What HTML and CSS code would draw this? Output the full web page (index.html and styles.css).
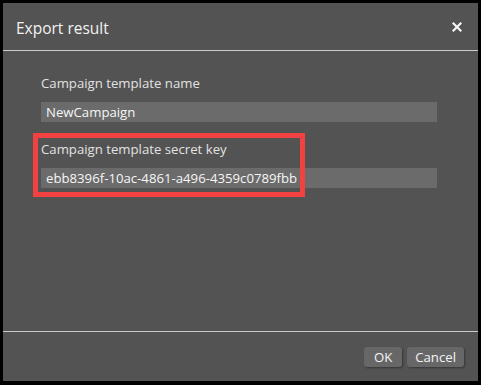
FILE: index.html
```html
<!DOCTYPE html>
<html>
<head>
<meta charset="utf-8">
<link rel="stylesheet" href="styles.css">
</head>
<body>
<div class="dialog">
  <div class="header">
    <span class="title">Export result</span>
    <svg class="close" width="10" height="10" viewBox="0 0 10 10"><path d="M1.5 1.5 L8.5 8.5 M8.5 1.5 L1.5 8.5" stroke="#f4f4f4" stroke-width="2.2" stroke-linecap="square"/></svg>
  </div>
  <div class="content">
    <div class="field">
      <div class="label">Campaign template name</div>
      <div class="input">NewCampaign</div>
    </div>
    <div class="field highlighted">
      <div class="label">Campaign template secret key</div>
      <div class="input">ebb8396f-10ac-4861-a496-4359c0789fbb</div>
      <div class="highlight"></div>
    </div>
  </div>
  <div class="footer">
    <button class="btn btn-ok">OK</button>
    <button class="btn">Cancel</button>
  </div>
</div>
</body>
</html>
```

FILE: styles.css
```css
html, body {
  margin: 0;
  padding: 0;
  background: #000;
}
body {
  width: 481px;
  height: 385px;
  font-family: "Open Sans", "Noto Sans", sans-serif;
}
.dialog {
  margin: 3px 3px 4px 3px;
  width: 475px;
  height: 378px;
  background: #535353;
  display: flex;
  flex-direction: column;
  color: #f2f2f2;
}
.header {
  height: 47px;
  border-bottom: 1px solid #cacaca;
  display: flex;
  align-items: center;
  justify-content: space-between;
  padding: 0 16px 0 13px;
}
.title {
  font-size: 15.5px;
  margin-top: 2px;
}
.close {
  display: block;
}
.content {
  flex: 1;
  padding: 23px 41px 0 38px;
  display: flex;
  flex-direction: column;
  gap: 18px;
}
.field {
  position: relative;
  display: flex;
  flex-direction: column;
  gap: 10px;
}
.label {
  font-size: 13.2px;
  line-height: 18px;
  color: #e2e2e2;
}
.input {
  height: 20px;
  line-height: 20px;
  background: #6b6b6b;
  padding-left: 5px;
  font-size: 13.2px;
  color: #f6f6f6;
}
.highlight {
  position: absolute;
  left: -8px;
  top: -7px;
  width: 272px;
  height: 64px;
  box-sizing: border-box;
  border: 5px solid #f24141;
}
.footer {
  border-top: 1px solid #cacaca;
  display: flex;
  justify-content: flex-end;
  gap: 5px;
  padding: 15px 14px 14px 0;
}
.btn {
  font-family: "Open Sans", "Noto Sans", sans-serif;
  font-size: 13.2px;
  color: #f4f4f4;
  background: #676767;
  border: none;
  border-radius: 3px;
  height: 20px;
  padding: 0 8px;
  box-shadow: 1px 1px 2px rgba(0,0,0,0.35);
  line-height: 20px;
}
.btn-ok {
  width: 38px;
}
```
